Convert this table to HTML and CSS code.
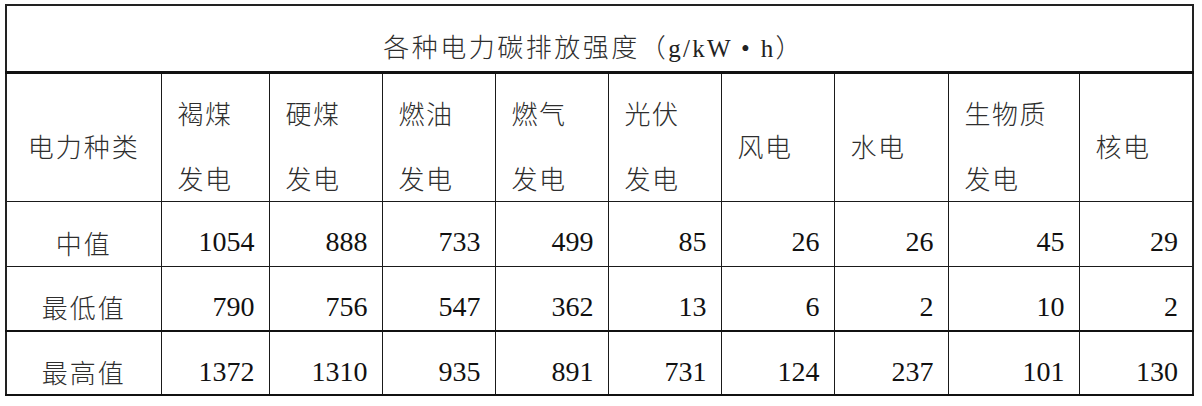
FILE: index.html
```html
<!DOCTYPE html>
<html lang="zh-CN">
<head>
<meta charset="utf-8">
<title>各种电力碳排放强度</title>
<link rel="stylesheet" href="styles.css">
</head>
<body>
<table class="grid">
  <colgroup>
    <col class="c-label">
    <col class="c-a">
    <col class="c-b">
    <col class="c-b">
    <col class="c-b">
    <col class="c-b">
    <col class="c-b">
    <col class="c-c">
    <col class="c-d">
    <col class="c-c">
  </colgroup>
  <tr class="r-title">
    <td colspan="10" class="title">各种电力碳排放强度<span class="paren">（</span><span class="unit">g/kW • h</span><span class="paren">）</span></td>
  </tr>
  <tr class="r-head">
    <td class="label">电力种类</td>
    <td class="head"><span class="ln">褐煤</span><span class="ln">发电</span></td>
    <td class="head"><span class="ln">硬煤</span><span class="ln">发电</span></td>
    <td class="head"><span class="ln">燃油</span><span class="ln">发电</span></td>
    <td class="head"><span class="ln">燃气</span><span class="ln">发电</span></td>
    <td class="head"><span class="ln">光伏</span><span class="ln">发电</span></td>
    <td class="head"><span class="ln">风电</span></td>
    <td class="head"><span class="ln">水电</span></td>
    <td class="head"><span class="ln">生物质</span><span class="ln">发电</span></td>
    <td class="head"><span class="ln">核电</span></td>
  </tr>
  <tr class="r-data r1">
    <td class="label">中值</td>
    <td class="num">1054</td><td class="num">888</td><td class="num">733</td><td class="num">499</td><td class="num">85</td><td class="num">26</td><td class="num">26</td><td class="num">45</td><td class="num">29</td>
  </tr>
  <tr class="r-data r2">
    <td class="label">最低值</td>
    <td class="num">790</td><td class="num">756</td><td class="num">547</td><td class="num">362</td><td class="num">13</td><td class="num">6</td><td class="num">2</td><td class="num">10</td><td class="num">2</td>
  </tr>
  <tr class="r-data r3">
    <td class="label">最高值</td>
    <td class="num">1372</td><td class="num">1310</td><td class="num">935</td><td class="num">891</td><td class="num">731</td><td class="num">124</td><td class="num">237</td><td class="num">101</td><td class="num">130</td>
  </tr>
</table>
</body>
</html>
```
FILE: styles.css
```css
html, body {
  margin: 0;
  padding: 0;
  background: #ffffff;
}
body {
  padding: 4px 0 0 5px;
}
.grid {
  border-collapse: collapse;
  table-layout: fixed;
  width: 1188px;
  font-family: "Noto Sans CJK SC", "Noto Sans", sans-serif;
  font-weight: 300;
  color: #2e2e2e;
}
.c-label { width: 155px; }
.c-a { width: 108px; }
.c-b { width: 113px; }
.c-c { width: 114px; }
.c-d { width: 131px; }

.grid td {
  border: 1px solid #1a1a1a;
  padding: 0;
  vertical-align: middle;
  box-sizing: border-box;
}
.r-title td { border-top: 2px solid #222; border-bottom: 3px solid #111; }
.r2 td { border-bottom: 2px solid #111; }
.r3 td { border-bottom: 2px solid #111; }
.grid tr td:first-child { border-left: 2px solid #222; }
.grid tr td:last-child { border-right: 2px solid #222; }

.r-title { height: 67px; }
.r-head { height: 129px; }
.r1 { height: 65px; }
.r2 { height: 65px; }
.r3 { height: 64px; }

.title {
  text-align: center;
  font-size: 26px;
  letter-spacing: 2.5px;
  padding-top: 14px !important;
  padding-right: 12px !important;
  white-space: nowrap;
}
.unit {
  font-family: "Liberation Serif", "Noto Sans CJK SC", serif;
  font-weight: 400;
  font-size: 25px;
  letter-spacing: 2.3px;
  color: #222;
}
.head {
  text-align: left;
  font-size: 26px;
  letter-spacing: 1.5px;
  padding-left: 16px !important;
  padding-top: 17px !important;
}
.ln {
  display: block;
  line-height: 40px;
}
.ln + .ln {
  margin-top: 25px;
}
.label {
  text-align: center;
  font-size: 26px;
  letter-spacing: 2px;
  padding-top: 17px !important;
}
.num {
  text-align: right;
  font-family: "Liberation Serif", "DejaVu Serif", serif;
  font-weight: 400;
  font-size: 28px;
  color: #111;
  padding-right: 14px !important;
  padding-top: 17px !important;
}
```
